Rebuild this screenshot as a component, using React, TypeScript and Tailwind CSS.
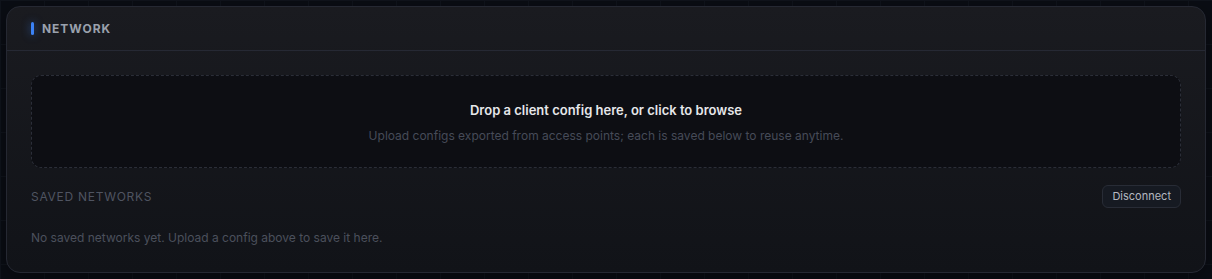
export default function App() {
  return (
    <div className="min-h-[279px] w-full bg-[#0a0d14] bg-[linear-gradient(to_right,#10141c_1px,transparent_1px),linear-gradient(to_bottom,#10141c_1px,transparent_1px)] bg-[size:44px_44px] p-[6px] font-['Inter',sans-serif]">
      <section className="rounded-[14px] border border-[#252832] bg-gradient-to-b from-[#1a1b20] to-[#111318] shadow-[0_8px_24px_rgba(0,0,0,0.4)]">
        {/* Header */}
        <div className="flex h-[44px] items-center gap-2 border-b border-[#262934] px-6">
          <span className="h-[13px] w-[3px] rounded-full bg-[#3b82f6] shadow-[0_0_8px_rgba(59,130,246,0.6)]" />
          <h2 className="text-xs font-bold tracking-[0.08em] text-[#9aa1ad]">NETWORK</h2>
        </div>

        <div className="px-6 pb-[26px] pt-6">
          {/* Drop zone */}
          <div className="flex h-[93px] cursor-pointer flex-col items-center justify-center gap-[7px] rounded-[10px] border border-dashed border-[#2b2e38] bg-[#0d0e13] pt-[2px]">
            <p className="text-[13px] font-semibold text-[#e6e7ea]">Drop a client config here, or click to browse</p>
            <p className="text-xs text-[#464b58]">
              Upload configs exported from access points; each is saved below to reuse anytime.
            </p>
          </div>

          {/* Saved networks */}
          <div className="mt-[17px] flex items-center justify-between">
            <span className="text-xs uppercase tracking-[0.06em] text-[#4f5461]">Saved Networks</span>
            <button className="h-[23px] rounded-md border border-[#282c36] bg-[#161a22] px-[9px] text-[11px] text-[#b4b8c0]">
              Disconnect
            </button>
          </div>

          <p className="mt-[22px] text-xs text-[#4b505c]">No saved networks yet. Upload a config above to save it here.</p>
        </div>
      </section>
    </div>
  )
}
